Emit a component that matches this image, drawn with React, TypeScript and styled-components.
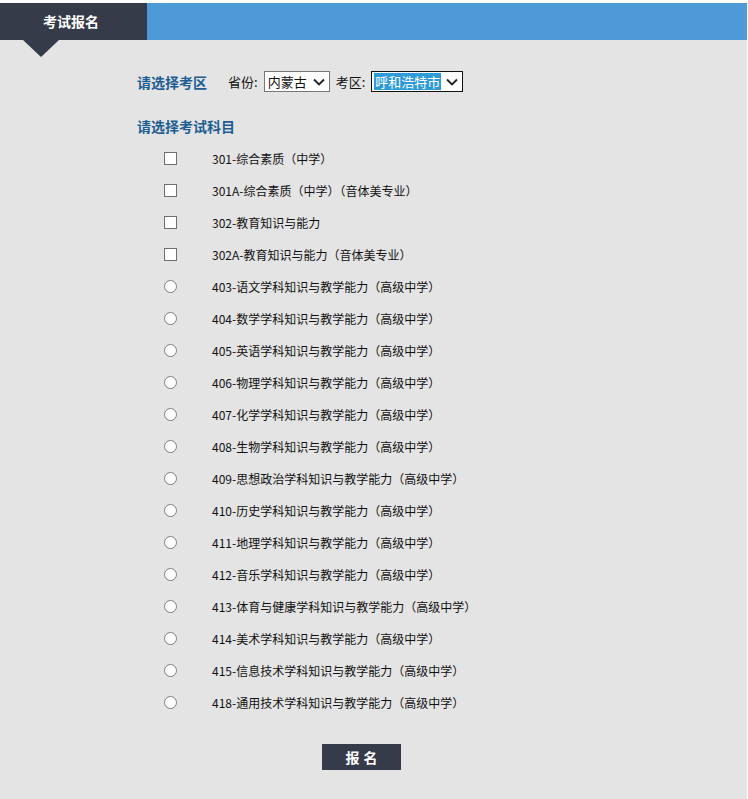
import styled, { createGlobalStyle } from "styled-components";

const GlobalStyle = createGlobalStyle`
  body {
    margin: 0;
    background: #ffffff;
    font-family: "Noto Sans CJK SC", "Liberation Sans", sans-serif;
  }
`;

const Page = styled.div`
  width: 747px;
  min-height: 796px;
  margin-top: 3px;
  background: #e4e4e4;
`;

const Header = styled.div`
  display: flex;
  height: 37px;
  background: #4e9ad8;
`;

const Tab = styled.div`
  position: relative;
  width: 147px;
  background: #363b4a;
  color: #ffffff;
  font-size: 14px;
  font-weight: 700;
  line-height: 37px;
  padding-left: 43px;
  box-sizing: border-box;
  &::after {
    content: "";
    position: absolute;
    left: 23px;
    bottom: -17px;
    border-left: 18px solid transparent;
    border-right: 18px solid transparent;
    border-top: 17px solid #363b4a;
  }
`;

const Content = styled.div`
  padding: 31px 0 28px 137px;
`;

const RegionRow = styled.div`
  display: flex;
  align-items: center;
  height: 21px;
  white-space: nowrap;
`;

const Title = styled.div`
  font-size: 14px;
  font-weight: 700;
  color: #1d5d92;
  line-height: 20px;
`;

const Label = styled.span<{ $gap: number }>`
  font-size: 13px;
  color: #111;
  margin-left: ${(p) => p.$gap}px;
  margin-right: 6px;
`;

const SelectBox = styled.div<{ $width: number; $focused?: boolean }>`
  display: flex;
  align-items: center;
  justify-content: space-between;
  flex-shrink: 0;
  width: ${(p) => p.$width}px;
  height: 21px;
  box-sizing: border-box;
  border: 1px solid ${(p) => (p.$focused ? "#111" : "#767676")};
  background: #ffffff;
  padding: 0 4px 0 2px;
  font-size: 13px;
  color: #111;
  white-space: nowrap;
  svg {
    flex-shrink: 0;
  }
`;

const SelectText = styled.span<{ $focused?: boolean }>`
  padding: 0 1px;
  line-height: 17px;
  background: ${(p) => (p.$focused ? "#2e9ad8" : "transparent")};
  color: ${(p) => (p.$focused ? "#ffffff" : "#111")};
`;

const SubjectTitle = styled(Title)`
  margin-top: 24px;
`;

const List = styled.div`
  margin-top: 6px;
  padding-left: 27px;
`;

const Row = styled.label`
  display: flex;
  align-items: center;
  height: 32px;
  font-size: 12px;
  color: #111;
`;

const Check = styled.input`
  appearance: none;
  margin: 0 35px 0 0;
  width: 13px;
  height: 13px;
  box-sizing: border-box;
  border: 1px solid #707070;
  background: #ffffff;
  border-radius: ${(p) => (p.type === "radio" ? "50%" : "0")};
  ${(p) => (p.type === "radio" ? "border-color: #7e7e7e;" : "")}
`;

const Submit = styled.button`
  display: block;
  margin: 26px 0 0 185px;
  width: 79px;
  height: 26px;
  border: none;
  background: #363b4a;
  color: #ffffff;
  font-family: "Noto Sans CJK SC", sans-serif;
  font-size: 14px;
  font-weight: 700;
  letter-spacing: 4px;
  padding: 0 0 0 4px;
`;

const Chevron = () => (
  <svg width="12" height="8" viewBox="0 0 12 8">
    <path d="M1 1.5 L6 6.5 L11 1.5" fill="none" stroke="#222" strokeWidth="1.9" />
  </svg>
);

const checkboxes = [
  "301-综合素质（中学）",
  "301A-综合素质（中学）（音体美专业）",
  "302-教育知识与能力",
  "302A-教育知识与能力（音体美专业）",
];

const radios = [
  "403-语文学科知识与教学能力（高级中学）",
  "404-数学学科知识与教学能力（高级中学）",
  "405-英语学科知识与教学能力（高级中学）",
  "406-物理学科知识与教学能力（高级中学）",
  "407-化学学科知识与教学能力（高级中学）",
  "408-生物学科知识与教学能力（高级中学）",
  "409-思想政治学科知识与教学能力（高级中学）",
  "410-历史学科知识与教学能力（高级中学）",
  "411-地理学科知识与教学能力（高级中学）",
  "412-音乐学科知识与教学能力（高级中学）",
  "413-体育与健康学科知识与教学能力（高级中学）",
  "414-美术学科知识与教学能力（高级中学）",
  "415-信息技术学科知识与教学能力（高级中学）",
  "418-通用技术学科知识与教学能力（高级中学）",
];

const App = () => {
  return (
    <>
      <GlobalStyle />
      <Page>
        <Header>
          <Tab>考试报名</Tab>
        </Header>
        <Content>
          <RegionRow>
            <Title>请选择考区</Title>
            <Label $gap={21}>省份:</Label>
            <SelectBox $width={66}>
              <SelectText>内蒙古</SelectText>
              <Chevron />
            </SelectBox>
            <Label $gap={6}>考区:</Label>
            <SelectBox $width={92} $focused>
              <SelectText $focused>呼和浩特市</SelectText>
              <Chevron />
            </SelectBox>
          </RegionRow>
          <SubjectTitle>请选择考试科目</SubjectTitle>
          <List>
            {checkboxes.map((item) => (
              <Row key={item}>
                <Check type="checkbox" />
                {item}
              </Row>
            ))}
            {radios.map((item) => (
              <Row key={item}>
                <Check type="radio" name="subject" />
                {item}
              </Row>
            ))}
          </List>
          <Submit>报名</Submit>
        </Content>
      </Page>
    </>
  );
};

export default App;
